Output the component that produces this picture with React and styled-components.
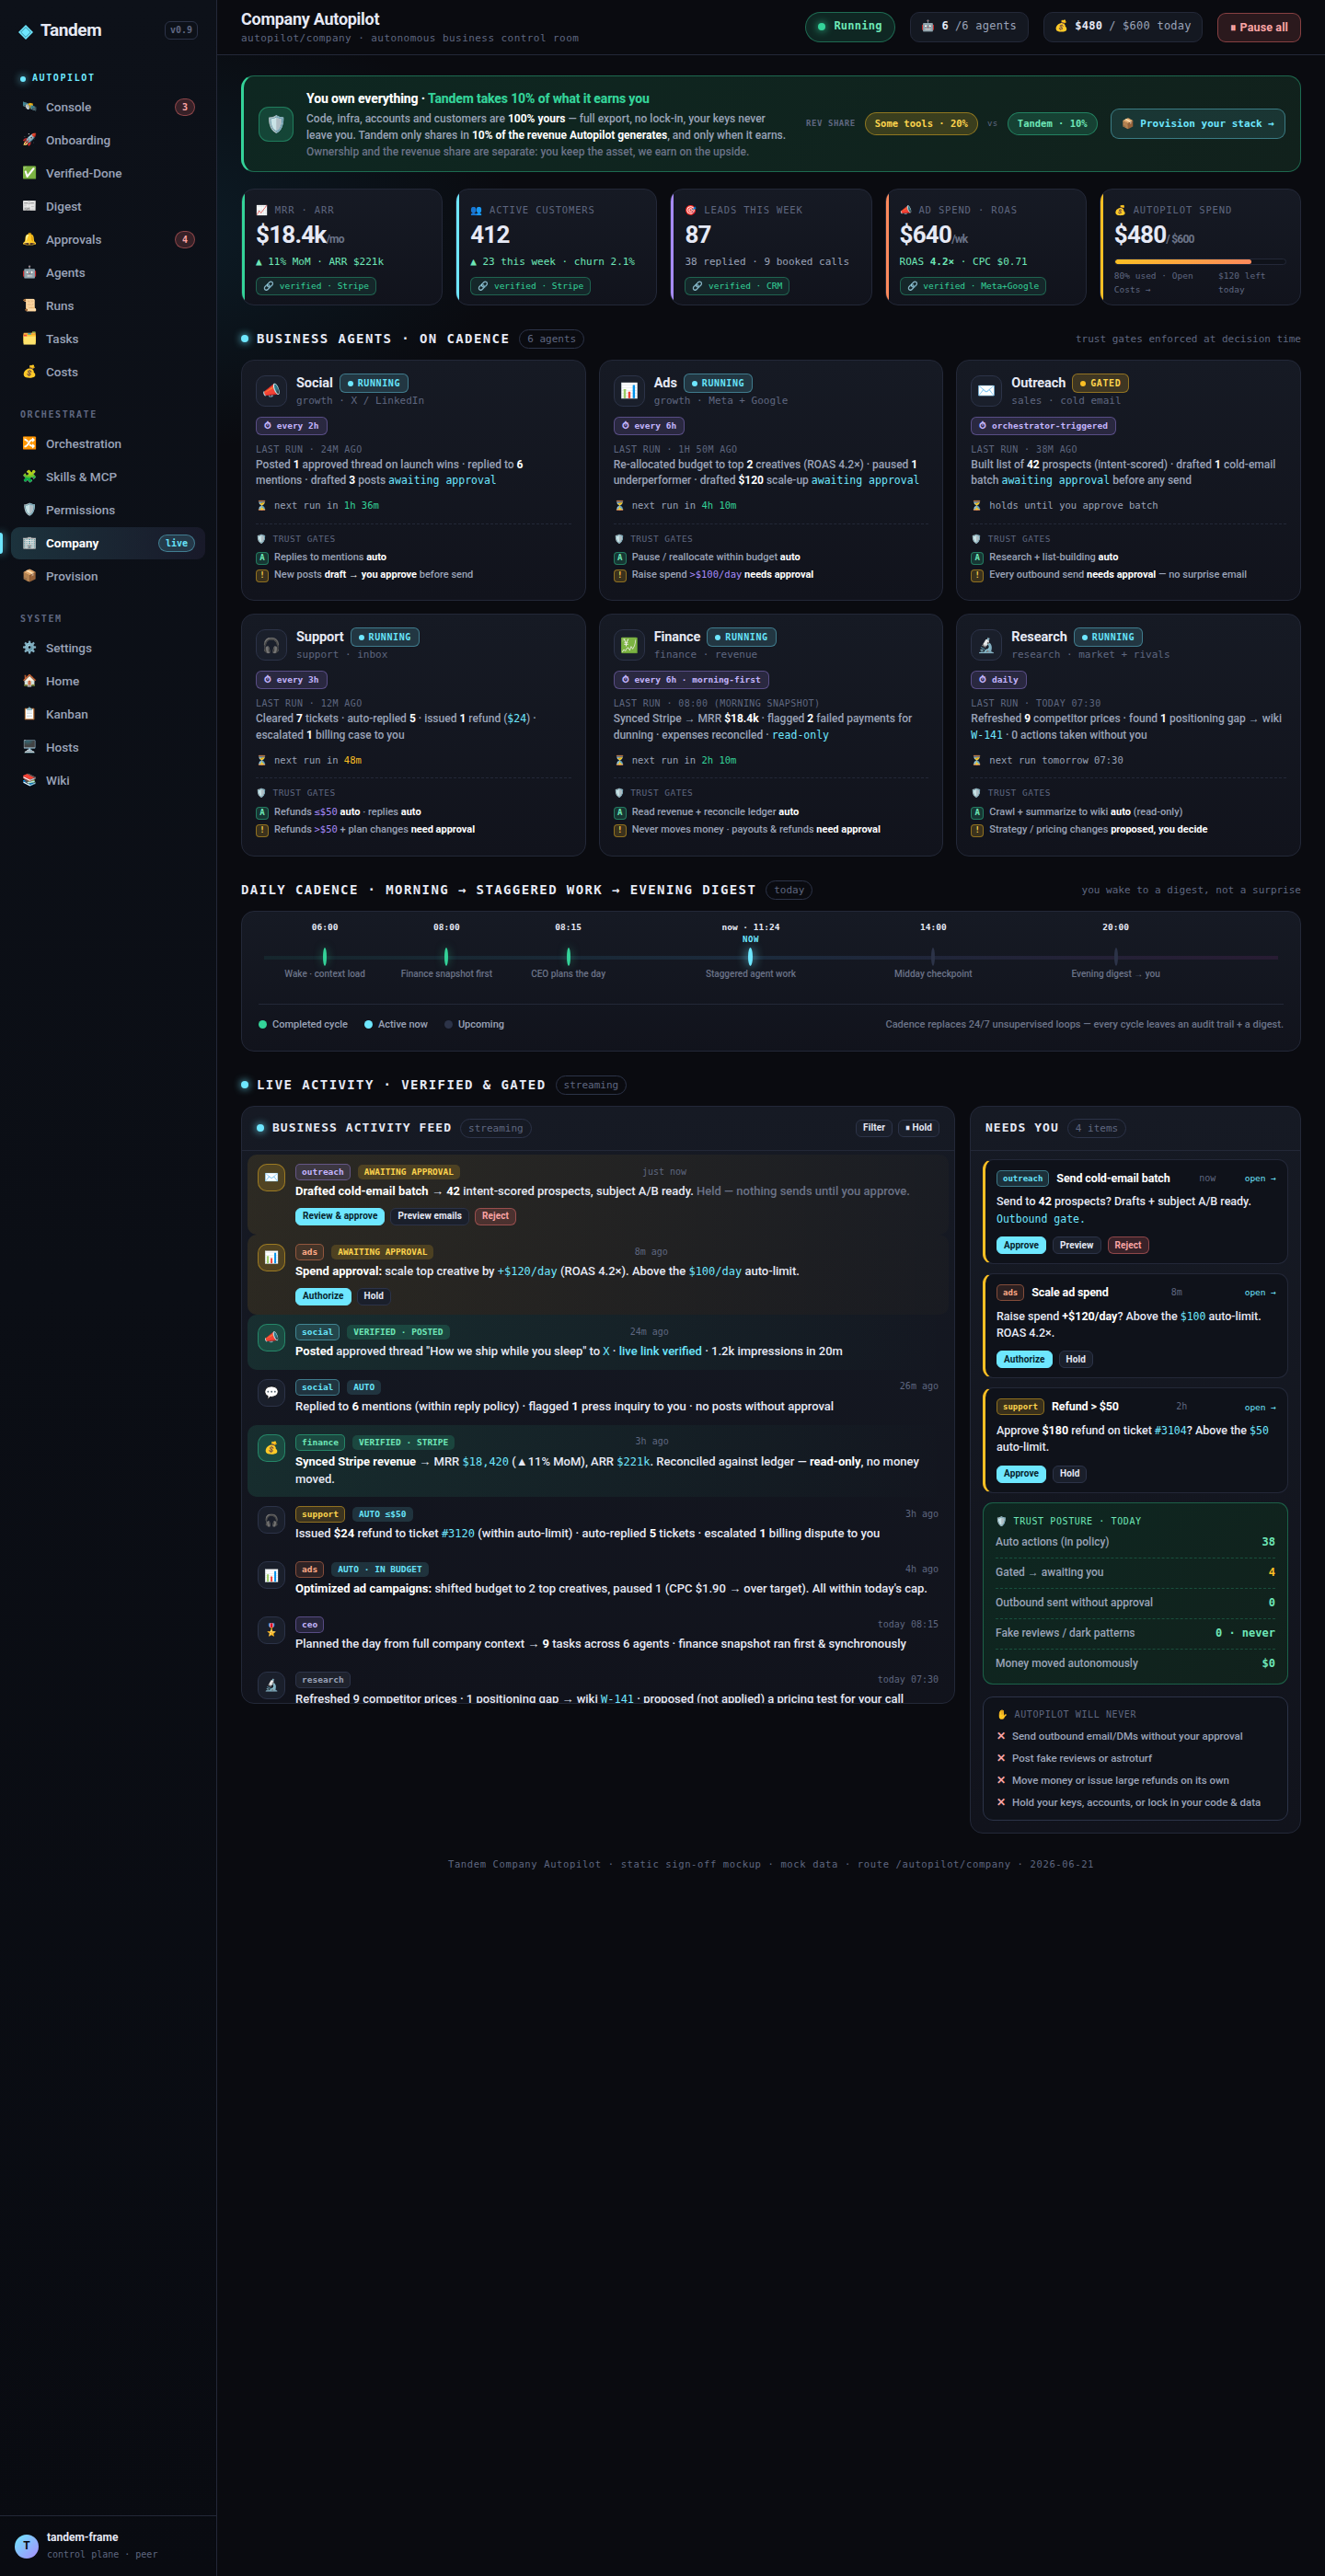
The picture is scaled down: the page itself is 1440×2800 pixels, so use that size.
import React from "react";
import styled, { createGlobalStyle, css } from "styled-components";

const GlobalStyle = createGlobalStyle`
  * { box-sizing: border-box; }
  body {
    margin: 0;
    background: #0a0b10;
    color: #e6e9f5;
    font-family: Roboto, sans-serif;
    font-size: 13px;
    font-weight: 500;
    line-height: 1.45;
  }
  button { font-family: inherit; cursor: pointer; }
`;

const mono = css`
  font-family: "DejaVu Sans Mono", monospace;
`;

// palette for tags, badges and accents
const tons = {
  cyan: { cor: "#6ee7ff", texto: "#67e3f9", fundo: "rgba(110,231,255,.14)", borda: "rgba(110,231,255,.4)" },
  green: { cor: "#34d399", texto: "#6ee7b7", fundo: "rgba(52,211,153,.18)", borda: "rgba(52,211,153,.45)" },
  violet: { cor: "#a78bfa", texto: "#c4b5fd", fundo: "rgba(167,139,250,.14)", borda: "rgba(167,139,250,.38)" },
  amber: { cor: "#fbbf24", texto: "#fcd34d", fundo: "rgba(251,191,36,.18)", borda: "rgba(251,191,36,.45)" },
  orange: { cor: "#ff8a5c", texto: "#ffab87", fundo: "rgba(255,138,92,.12)", borda: "rgba(255,138,92,.42)" },
  red: { cor: "#f87171", texto: "#fca5a5", fundo: "rgba(248,113,113,.18)", borda: "rgba(248,113,113,.45)" },
  gray: { cor: "#2c3348", texto: "#9aa3b8", fundo: "rgba(148,163,184,.1)", borda: "#2c3348" },
};

const Shell = styled.div`
  display: grid;
  grid-template-columns: 236px 1fr;
  min-height: 100vh;
  background: radial-gradient(400px 240px at 160px 250px, rgba(20, 90, 120, .22), transparent), #0a0b10;
`;

/* ---------- sidebar ---------- */

const Sidebar = styled.aside`
  display: flex;
  flex-direction: column;
  border-right: 1px solid #232838;
  background: linear-gradient(180deg, #0d1119, #090b11);
`;

const Brand = styled.div`
  display: flex;
  align-items: center;
  height: 66px;
  padding: 0 20px;
  gap: 8px;
  > svg { margin-top: 4px; }
`;

const BrandName = styled.span`
  font-size: 19px;
  font-weight: 700;
  letter-spacing: -.02em;
`;

const Version = styled.span`
  ${mono}
  margin-left: auto;
  padding: 0 5px;
  font-size: 10px;
  font-weight: 700;
  line-height: 18px;
  color: #5f6780;
  border: 1px solid #2c3348;
  border-radius: 6px;
`;

const NavGroup = styled.nav`
  padding: 0 12px;
  margin-bottom: 21px;
`;

const NavTitle = styled.div`
  ${mono}
  display: flex;
  align-items: center;
  gap: 7px;
  height: 15px;
  padding: 0 10px;
  margin: ${p => (p.$live ? "12px" : "0")} 0 6px;
  font-size: 10px;
  font-weight: 700;
  letter-spacing: .16em;
  color: ${p => (p.$live ? "#6ee7ff" : "#5f6780")};
`;

const GlowDot = styled.i`
  flex: none;
  width: ${p => p.$size || 6}px;
  height: ${p => p.$size || 6}px;
  border-radius: 50%;
  background: ${p => tons[p.$tone || "cyan"].cor};
  box-shadow: ${p => (p.$flat ? "none" : `0 0 8px ${tons[p.$tone || "cyan"].cor}`)};
`;

const NavItem = styled.a`
  position: relative;
  display: flex;
  align-items: center;
  gap: 10px;
  height: 35px;
  margin: 1px 0;
  padding: 0 11px 0 12px;
  border-radius: 9px;
  font-size: 13.5px;
  color: #9aa3b8;
  ${p => p.$active && css`
    color: #fff;
    font-weight: 700;
    background: linear-gradient(90deg, rgba(110, 231, 255, .16), rgba(167, 139, 250, .08));
    &::before {
      content: "";
      position: absolute;
      left: -12px;
      top: 6px;
      width: 3px;
      height: 23px;
      border-radius: 0 3px 3px 0;
      background: #6ee7ff;
      box-shadow: 0 0 10px #6ee7ff;
    }
  `}
`;

const NavIcon = styled.span`
  width: 16px;
  font-size: 13px;
  text-align: center;
  white-space: nowrap;
`;

const NavBadge = styled.span`
  ${mono}
  margin-left: auto;
  padding: 0 7px;
  font-size: 10px;
  font-weight: 700;
  line-height: 17px;
  border-radius: 20px;
  color: ${p => tons[p.$tone].texto};
  background: ${p => tons[p.$tone].fundo};
  border: 1px solid ${p => tons[p.$tone].borda};
`;

const SideFoot = styled.div`
  display: flex;
  align-items: center;
  gap: 9px;
  height: 66px;
  margin-top: auto;
  padding: 0 16px;
  border-top: 1px solid #232838;
`;

const Avatar = styled.span`
  display: grid;
  place-items: center;
  width: 26px;
  height: 26px;
  border-radius: 50%;
  font-size: 12px;
  font-weight: 700;
  color: #0a0b10;
  background: linear-gradient(135deg, #6ee7ff, #a78bfa);
`;

const FootName = styled.div`
  font-size: 12px;
  font-weight: 700;
  line-height: 19px;
`;

const FootSub = styled.div`
  ${mono}
  font-size: 10px;
  line-height: 18px;
  color: #5f6780;
`;

/* ---------- topbar ---------- */

const Main = styled.main`
  min-width: 0;
`;

const Topbar = styled.header`
  display: flex;
  align-items: center;
  gap: 16px;
  height: 60px;
  padding: 0 26px;
  border-bottom: 1px solid #232838;
  background: #0a0b10;
`;

const TitleBlock = styled.div`
  margin-right: auto;
`;

const PageTitle = styled.h1`
  margin: 0;
  font-size: 18px;
  font-weight: 700;
  line-height: 24px;
  letter-spacing: -.015em;
`;

const PageSub = styled.div`
  ${mono}
  font-size: 11px;
  line-height: 18px;
  letter-spacing: .04em;
  color: #5f6780;
`;

const StatPill = styled.div`
  ${mono}
  display: flex;
  align-items: center;
  gap: ${p => (p.$running ? 9 : 7)}px;
  height: 33px;
  padding: 0 ${p => (p.$running ? 13 : 11.5)}px 1px;
  font-size: 12px;
  letter-spacing: .02em;
  white-space: nowrap;
  border-radius: ${p => (p.$running ? 20 : 10)}px;
  font-weight: ${p => (p.$running ? 700 : 400)};
  color: ${p => (p.$running ? "#6ee7b7" : "#9aa3b8")};
  background: ${p => (p.$running ? "rgba(52,211,153,.14)" : "#141821")};
  border: 1px solid ${p => (p.$running ? "rgba(52,211,153,.4)" : "#232838")};
  b { color: #e6e9f5; }
`;

const PauseButton = styled.button`
  height: 32px;
  padding: 0 13px;
  font-size: 12.5px;
  font-weight: 700;
  letter-spacing: .01em;
  color: #fca5a5;
  background: rgba(248, 113, 113, .14);
  border: 1px solid rgba(248, 113, 113, .45);
  border-radius: 9px;
`;

/* ---------- content ---------- */

const Content = styled.div`
  padding: 22px 26px 0;
`;

const Banner = styled.section`
  display: flex;
  align-items: center;
  height: 105px;
  padding: 0 16px;
  border: 1px solid rgba(52, 211, 153, .4);
  border-left: 3px solid #34d399;
  border-radius: 14px;
  background: linear-gradient(135deg, #0e2721, #11211c);
`;

const BannerIcon = styled.div`
  display: grid;
  place-items: center;
  flex: none;
  width: 38px;
  height: 38px;
  font-size: 18px;
  line-height: 20px;
  border-radius: 11px;
  background: rgba(52, 211, 153, .18);
  border: 1px solid rgba(52, 211, 153, .4);
`;

const BannerText = styled.div`
  flex: 1;
  margin: 0 14px;
  font-size: 12px;
  line-height: 18px;
  color: #9aa3b8;
  b { color: #fff; }
`;

const BannerTitle = styled.div`
  margin-bottom: 2px;
  font-size: 14px;
  font-weight: 800;
  line-height: 22px;
  letter-spacing: -.01em;
  color: #fff;
  span { color: #34d399; }
`;

const Dim = styled.span`
  color: #6b7388;
`;

const RevShare = styled.div`
  ${mono}
  display: flex;
  align-items: center;
  gap: 10px;
  margin-right: 14px;
  font-size: 9px;
  letter-spacing: .06em;
  color: #5f6780;
  white-space: nowrap;
`;

const RevLabel = styled.span`
  font-weight: 700;
`;

const RevPill = styled.span`
  padding: 0 10px;
  font-size: 10.5px;
  font-weight: 700;
  letter-spacing: 0;
  line-height: 23px;
  border-radius: 20px;
  color: ${p => tons[p.$tone].texto};
  background: ${p => tons[p.$tone].fundo};
  border: 1px solid ${p => tons[p.$tone].borda};
`;

const StackButton = styled.button`
  ${mono}
  height: 33px;
  padding: 0 11px 1px;
  font-size: 11px;
  font-weight: 700;
  white-space: nowrap;
  color: #6ee7ff;
  background: rgba(110, 231, 255, .1);
  border: 1px solid rgba(110, 231, 255, .4);
  border-radius: 9px;
`;

const KpiGrid = styled.section`
  display: grid;
  grid-template-columns: repeat(5, 1fr);
  gap: 14px;
  margin-top: 18px;
`;

const cardBase = css`
  background: linear-gradient(180deg, #161a24, #11131c);
  border: 1px solid #232838;
  border-radius: 14px;
`;

const KpiCard = styled.div`
  ${cardBase}
  position: relative;
  overflow: hidden;
  height: 127px;
  padding: 14px 15px 0;
  &::before {
    content: "";
    position: absolute;
    left: 0;
    top: 0;
    bottom: 0;
    width: 3px;
    background: ${p => tons[p.$tone].cor};
  }
`;

const KpiLabel = styled.div`
  ${mono}
  display: flex;
  gap: 7px;
  font-size: 10.5px;
  line-height: 16px;
  letter-spacing: .08em;
  color: #5f6780;
`;

const KpiValue = styled.div`
  margin-top: 3px;
  font-size: 26px;
  font-weight: 700;
  line-height: 32px;
  letter-spacing: -.03em;
  small {
    font-size: 12px;
    color: #6b7388;
  }
`;

const KpiDelta = styled.div`
  ${mono}
  margin-top: 1px;
  font-size: 11px;
  line-height: 16px;
  color: ${p => (p.$plain ? "#9aa3b8" : "#6ee7b7")};
`;

const Verified = styled.span`
  ${mono}
  display: inline-block;
  margin-top: 8px;
  padding: 0 7px;
  font-size: 9.5px;
  line-height: 18px;
  color: #34d399;
  background: rgba(52, 211, 153, .1);
  border: 1px solid rgba(52, 211, 153, .35);
  border-radius: 6px;
`;

const Meter = styled.div`
  height: 7px;
  margin-top: 5px;
  overflow: hidden;
  border: 1px solid #232838;
  border-radius: 6px;
  background: #0f121a;
`;

const MeterFill = styled.div`
  height: 100%;
  border-radius: 6px;
  background: linear-gradient(90deg, #fbbf24, #ff8a5c);
`;

const MeterFoot = styled.div`
  ${mono}
  display: flex;
  justify-content: space-between;
  margin-top: 4px;
  font-size: 9.5px;
  line-height: 15px;
  color: #5f6780;
`;

const SectionHead = styled.div`
  display: flex;
  align-items: center;
  gap: 10px;
  height: 21px;
  margin: 26px 0 12px;
`;

const SectionTitle = styled.h2`
  ${mono}
  display: flex;
  align-items: center;
  gap: 9px;
  margin: 0;
  font-size: ${p => (p.$small ? 13 : 14)}px;
  font-weight: 700;
  letter-spacing: ${p => (p.$small ? ".08em" : ".1em")};
`;

const CountChip = styled.span`
  ${mono}
  padding: 0 8px;
  font-size: 11px;
  line-height: 19px;
  color: #5f6780;
  border: 1px solid #2c3348;
  border-radius: 20px;
`;

const SectionHint = styled.span`
  ${mono}
  margin-left: auto;
  font-size: 11px;
  color: #5f6780;
`;

const AgentGrid = styled.section`
  display: grid;
  grid-template-columns: repeat(3, 1fr);
  grid-template-rows: 262.4px 263.6px;
  gap: 14px;
`;

const AgentCard = styled.article`
  ${cardBase}
  padding: 14px 15px;
`;

const AgentHead = styled.div`
  display: flex;
  align-items: center;
  gap: 10px;
  height: 38px;
`;

const IconBox = styled.div`
  display: grid;
  place-items: center;
  flex: none;
  width: ${p => p.$size}px;
  height: ${p => p.$size}px;
  font-size: ${p => (p.$size > 32 ? 16 : 13)}px;
  line-height: 1.2;
  border-radius: 10px;
  background: ${p => (p.$tone ? tons[p.$tone].fundo : "#1a1f2b")};
  border: 1px solid ${p => (p.$tone ? tons[p.$tone].borda : "#2c3348")};
`;

const AgentName = styled.div`
  display: flex;
  align-items: center;
  gap: 7px;
  height: 21px;
  font-size: 14.5px;
  font-weight: 700;
  letter-spacing: -.005em;
`;

const StateBadge = styled.span`
  ${mono}
  display: flex;
  align-items: center;
  gap: 5px;
  padding: 0 8px;
  font-size: 10px;
  font-weight: 700;
  line-height: 19px;
  letter-spacing: .06em;
  border-radius: 6px;
  color: ${p => tons[p.$tone].texto};
  background: ${p => tons[p.$tone].fundo};
  border: 1px solid ${p => tons[p.$tone].borda};
`;

const AgentRole = styled.div`
  ${mono}
  font-size: 11px;
  line-height: 17px;
  color: #5f6780;
`;

const CadenceChip = styled.div`
  ${mono}
  width: fit-content;
  margin-top: 9px;
  padding: 0 8px;
  font-size: 9.5px;
  font-weight: 700;
  line-height: 18px;
  color: #c4b5fd;
  background: rgba(167, 139, 250, .14);
  border: 1px solid rgba(167, 139, 250, .38);
  border-radius: 6px;
`;

const LastRun = styled.div`
  ${mono}
  margin-top: 8px;
  font-size: 10px;
  line-height: 16px;
  letter-spacing: .04em;
  color: #5f6780;
`;

const RunText = styled.div`
  font-size: 12px;
  line-height: 17.4px;
  color: #9aa3b8;
  b { color: #fff; }
`;

const Code = styled.span`
  ${mono}
  font-size: ${p => p.$size || 11.5}px;
  line-height: 1;
  color: ${p => tons[p.$tone || "cyan"].cor};
`;

const NextRun = styled.div`
  ${mono}
  display: flex;
  gap: 7px;
  margin-top: 9.6px;
  padding-bottom: 11.7px;
  font-size: 10.5px;
  line-height: 16px;
  color: #9aa3b8;
  border-bottom: 1px dashed #232838;
`;

const GateTitle = styled.div`
  ${mono}
  display: flex;
  gap: 6px;
  margin: 8.7px 0 5.5px;
  font-size: 9.5px;
  line-height: 14px;
  letter-spacing: .05em;
  color: #5f6780;
`;

const GateRow = styled.div`
  display: flex;
  gap: 6px;
  height: 19px;
  font-size: 11px;
  line-height: 16px;
  color: #9aa3b8;
  b { color: #fff; }
`;

const GateMark = styled.span`
  ${mono}
  flex: none;
  width: 14px;
  height: 14px;
  margin-top: 2px;
  font-size: 9px;
  font-weight: 700;
  line-height: 11px;
  text-align: center;
  border-radius: 4px;
  color: ${p => tons[p.$tone].texto};
  background: ${p => tons[p.$tone].fundo};
  border: 1px solid ${p => tons[p.$tone].borda};
`;

/* ---------- cadence ---------- */

const CadenceCard = styled.section`
  ${cardBase}
  height: 153px;
  padding: 9px 18px 0;
`;

// one column per stop, sized so that each stop is centred on its share of the day
const Rail = styled.div`
  display: grid;
  grid-template-columns: 12fr 12fr 12fr 24fr 12fr 24fr 4fr;
  height: 91px;
  margin: 0 6px;
  background: linear-gradient(90deg, #16262d, #1c2a3c 50%, #281c33) 0 39px / 100% 4px no-repeat;
`;

const Stop = styled.div`
  display: flex;
  flex-direction: column;
  align-items: center;
  white-space: nowrap;
`;

const StopTime = styled.div`
  ${mono}
  height: 15px;
  font-size: 9.5px;
  font-weight: 700;
  line-height: 15px;
`;

const StopNow = styled.div`
  ${mono}
  height: 15px;
  font-size: 9px;
  font-weight: 700;
  line-height: 13px;
  letter-spacing: .06em;
  color: #6ee7ff;
`;

const StopTick = styled.div`
  width: ${p => (p.$tone === "cyan" ? 5 : 4)}px;
  height: 20px;
  border-radius: 50%;
  background: ${p => tons[p.$tone].cor};
  box-shadow: ${p => ({
    gray: "none",
    green: "0 0 10px rgba(52,211,153,.5)",
    cyan: "0 0 12px #6ee7ff",
  }[p.$tone])};
`;

const StopLabel = styled.div`
  font-size: 10px;
  line-height: 17px;
  color: #6b7388;
`;

const Legend = styled.div`
  display: flex;
  align-items: center;
  gap: 18px;
  height: 44px;
  font-size: 11px;
  color: #9aa3b8;
  border-top: 1px solid #232838;
  > span {
    display: flex;
    align-items: center;
    gap: 6px;
  }
  > p {
    margin: 0 0 0 auto;
    color: #6b7388;
  }
`;

/* ---------- activity ---------- */

const ActivityGrid = styled.section`
  display: grid;
  grid-template-columns: 1fr 360px;
  gap: 16px;
  align-items: start;
`;

const Panel = styled.section`
  ${cardBase}
  min-width: 0;
  overflow: hidden;
`;

const PanelHead = styled.div`
  display: flex;
  align-items: center;
  gap: 9px;
  height: 48px;
  padding: 0 16px;
  border-bottom: 1px solid #232838;
`;

const Actions = styled.div`
  display: flex;
  gap: ${p => p.$gap || 6}px;
  margin-top: ${p => p.$top || 0}px;
  margin-left: ${p => (p.$right ? "auto" : "0")};
`;

const SmallButton = styled.button`
  height: 19px;
  padding: 0 7px;
  font-size: 10px;
  font-weight: 700;
  line-height: 16px;
  letter-spacing: .01em;
  border-radius: 6px;
  white-space: nowrap;
  color: #e6e9f5;
  background: #1a1f2b;
  border: 1px solid #2c3348;
  ${p => p.$kind === "primary" && css`
    color: #06232b;
    background: #6ee7ff;
    border-color: #6ee7ff;
  `}
  ${p => p.$kind === "danger" && css`
    color: #fca5a5;
    background: rgba(248, 113, 113, .18);
    border-color: rgba(248, 113, 113, .45);
  `}
`;

const FeedList = styled.div`
  height: 600px;
  padding: 4px 6px;
  overflow: hidden;
`;

const FeedRow = styled.div`
  display: flex;
  gap: 11px;
  padding: 10px 11px;
  border-radius: 10px;
  background: ${p => ({
    amber: "linear-gradient(90deg, rgba(251,191,36,.1), rgba(251,191,36,.02))",
    green: "linear-gradient(90deg, rgba(52,211,153,.12), transparent)",
  }[p.$tone] || "none")};
`;

const FeedBody = styled.div`
  flex: 1;
  min-width: 0;
`;

const FeedHead = styled.div`
  display: flex;
  align-items: center;
  gap: 8px;
  height: 18px;
  margin-bottom: 3px;
  padding-right: ${p => p.$tail || 0}px;
`;

const Tag = styled.span`
  ${mono}
  padding: 0 6px;
  font-size: ${p => (p.$small ? 9 : 9.5)}px;
  font-weight: 700;
  line-height: 16px;
  border-radius: 5px;
  color: ${p => tons[p.$tone].texto};
  background: ${p => tons[p.$tone].fundo};
  border: 1px solid ${p => tons[p.$tone].borda};
`;

const Status = styled.span`
  ${mono}
  padding: 0 7px;
  font-size: 9.5px;
  font-weight: 700;
  line-height: 16px;
  border-radius: 5px;
  color: ${p => tons[p.$tone].texto};
  background: ${p => tons[p.$tone].fundo};
`;

const Time = styled.span`
  ${mono}
  margin-left: auto;
  margin-right: ${p => (p.$float ? "auto" : "0")};
  font-size: 10px;
  color: #5f6780;
`;

const FeedText = styled.div`
  font-size: 13px;
  line-height: 18.9px;
  b { color: #fff; }
`;

const NeedsBody = styled.div`
  display: flex;
  flex-direction: column;
  padding: 9px 13px 13px;
`;

const NeedCard = styled.article`
  margin-bottom: 10px;
  padding: 11px 12px 10px;
  border: 1px solid #232838;
  border-left: 3px solid #fbbf24;
  border-radius: 11px;
  background: #0f121a;
`;

const NeedHead = styled.div`
  display: flex;
  align-items: center;
  gap: 8px;
  height: 18px;
  strong {
    font-size: 12.5px;
    font-weight: 700;
    letter-spacing: -.01em;
    color: #fff;
  }
`;

const OpenLink = styled.a`
  ${mono}
  margin-left: auto;
  font-size: 9.5px;
  color: #6ee7ff;
`;

const NeedText = styled.p`
  margin: 7.4px 0 10px;
  font-size: 12.5px;
  line-height: 18.4px;
  b { color: #fff; }
`;

const Posture = styled.div`
  padding: 12px 13px 4px;
  border: 1px solid rgba(52, 211, 153, .35);
  border-radius: 11px;
  background: linear-gradient(135deg, #0e2721, #11211c);
`;

const BoxTitle = styled.div`
  ${mono}
  display: flex;
  gap: 7px;
  font-size: 10px;
  line-height: 15px;
  letter-spacing: .06em;
  color: ${p => (p.$green ? "#6ee7b7" : "#5f6780")};
`;

const PostureRow = styled.div`
  display: flex;
  justify-content: space-between;
  align-items: center;
  height: 33px;
  font-size: 12px;
  color: #9aa3b8;
  border-bottom: 1px dashed rgba(52, 211, 153, .25);
  &:last-child { border-bottom: 0; }
  b {
    ${mono}
    color: ${p => (p.$warn ? "#fbbf24" : "#6ee7b7")};
  }
`;

const NeverBox = styled.div`
  margin-top: 13px;
  padding: 11px 14px 7px;
  border: 1px solid #2c3348;
  border-radius: 11px;
  background: #0f121a;
  ${BoxTitle} { margin-bottom: 4px; }
`;

const NeverRow = styled.div`
  display: flex;
  gap: 8px;
  font-size: 11.5px;
  line-height: 24px;
  color: #9aa3b8;
  i {
    width: 9px;
    font-style: normal;
    font-weight: 700;
    color: #fca5a5;
  }
`;

const PageFoot = styled.footer`
  ${mono}
  margin-top: 25px;
  text-align: center;
  font-size: 10.5px;
  line-height: 17px;
  letter-spacing: .06em;
  color: #5f6780;
`;

const menu = [
  {
    titulo: "AUTOPILOT",
    live: true,
    itens: [
      ["🛰️", "Console", "3"], ["🚀", "Onboarding"], ["✅", "Verified-Done"], ["📰", "Digest"],
      ["🔔", "Approvals", "4"], ["🤖", "Agents"], ["📜", "Runs"], ["🗂️", "Tasks"], ["💰", "Costs"],
    ],
  },
  {
    titulo: "ORCHESTRATE",
    itens: [
      ["🔀", "Orchestration"], ["🧩", "Skills & MCP"], ["🛡️", "Permissions"],
      ["🏢", "Company", "live"], ["📦", "Provision"],
    ],
  },
  {
    titulo: "SYSTEM",
    itens: [["⚙️", "Settings"], ["🏠", "Home"], ["📋", "Kanban"], ["🖥️", "Hosts"], ["📚", "Wiki"]],
  },
];

const kpis = [
  { tone: "green", icon: "📈", label: "MRR · ARR", value: "$18.4k", unit: "/mo", delta: "▲ 11% MoM · ARR $221k", source: "Stripe" },
  { tone: "cyan", icon: "👥", label: "ACTIVE CUSTOMERS", value: "412", delta: "▲ 23 this week · churn 2.1%", source: "Stripe" },
  { tone: "violet", icon: "🎯", label: "LEADS THIS WEEK", value: "87", delta: "38 replied · 9 booked calls", plain: true, source: "CRM" },
  { tone: "orange", icon: "📣", label: "AD SPEND · ROAS", value: "$640", unit: "/wk", delta: <>ROAS <b>4.2×</b> · CPC $0.71</>, source: "Meta+Google" },
];

const agents = [
  {
    icon: "📣", name: "Social", role: "growth · X / LinkedIn", every: "every 2h", last: "24M AGO",
    text: <>Posted <b>1</b> approved thread on launch wins · replied to <b>6</b> mentions · drafted <b>3</b> posts <Code>awaiting approval</Code></>,
    next: <>next run in <Code $size={10.5} $tone="green">1h 36m</Code></>,
    auto: <>Replies to mentions <b>auto</b></>,
    gate: <>New posts <b>draft → you approve</b> before send</>,
  },
  {
    icon: "📊", name: "Ads", role: "growth · Meta + Google", every: "every 6h", last: "1H 50M AGO",
    text: <>Re-allocated budget to top <b>2</b> creatives (ROAS 4.2×) · paused <b>1</b> underperformer · drafted <b>$120</b> scale-up <Code>awaiting approval</Code></>,
    next: <>next run in <Code $size={10.5} $tone="green">4h 10m</Code></>,
    auto: <>Pause / reallocate within budget <b>auto</b></>,
    gate: <>Raise spend <Code $size={10.5} $tone="violet">&gt;$100/day</Code> <b>needs approval</b></>,
  },
  {
    icon: "✉️", name: "Outreach", role: "sales · cold email", every: "orchestrator-triggered", last: "38M AGO", gated: true,
    text: <>Built list of <b>42</b> prospects (intent-scored) · drafted <b>1</b> cold-email batch <Code>awaiting approval</Code> before any send</>,
    next: <>holds until you approve batch</>,
    auto: <>Research + list-building <b>auto</b></>,
    gate: <>Every outbound send <b>needs approval</b> — no surprise email</>,
  },
  {
    icon: "🎧", name: "Support", role: "support · inbox", every: "every 3h", last: "12M AGO",
    text: <>Cleared <b>7</b> tickets · auto-replied <b>5</b> · issued <b>1</b> refund (<Code>$24</Code>) · escalated <b>1</b> billing case to you</>,
    next: <>next run in <Code $size={10.5} $tone="amber">48m</Code></>,
    auto: <>Refunds <Code $size={10.5} $tone="violet">≤$50</Code> <b>auto</b> · replies <b>auto</b></>,
    gate: <>Refunds <Code $size={10.5} $tone="violet">&gt;$50</Code> + plan changes <b>need approval</b></>,
  },
  {
    icon: "💹", name: "Finance", role: "finance · revenue", every: "every 6h · morning-first", last: "08:00 (MORNING SNAPSHOT)",
    text: <>Synced Stripe → MRR <b>$18.4k</b> · flagged <b>2</b> failed payments for dunning · expenses reconciled · <Code>read-only</Code></>,
    next: <>next run in <Code $size={10.5} $tone="green">2h 10m</Code></>,
    auto: <>Read revenue + reconcile ledger <b>auto</b></>,
    gate: <>Never moves money · payouts & refunds <b>need approval</b></>,
  },
  {
    icon: "🔬", name: "Research", role: "research · market + rivals", every: "daily", last: "TODAY 07:30",
    text: <>Refreshed <b>9</b> competitor prices · found <b>1</b> positioning gap → wiki <Code>W-141</Code> · 0 actions taken without you</>,
    next: <>next run tomorrow 07:30</>,
    auto: <>Crawl + summarize to wiki <b>auto</b> (read-only)</>,
    gate: <>Strategy / pricing changes <b>proposed, you decide</b></>,
  },
];

const stops = [
  { time: "06:00", label: "Wake · context load", tone: "green" },
  { time: "08:00", label: "Finance snapshot first", tone: "green" },
  { time: "08:15", label: "CEO plans the day", tone: "green" },
  { time: "now · 11:24", label: "Staggered agent work", tone: "cyan" },
  { time: "14:00", label: "Midday checkpoint", tone: "gray" },
  { time: "20:00", label: "Evening digest → you", tone: "gray" },
];

const LiveLink = styled.a`
  color: #6ee7ff;
`;

const feed = [
  {
    icon: "✉️", tag: "outreach", tagTone: "violet", status: "AWAITING APPROVAL", tone: "amber", time: "just now",
    text: <><b>Drafted cold-email batch</b> → <b>42</b> intent-scored prospects, subject A/B ready. <Dim>Held — nothing sends until you approve.</Dim></>,
    actions: [["Review & approve", "primary"], ["Preview emails"], ["Reject", "danger"]],
  },
  {
    icon: "📊", tag: "ads", tagTone: "orange", status: "AWAITING APPROVAL", tone: "amber", time: "8m ago",
    text: <><b>Spend approval:</b> scale top creative by <Code $size={12}>+$120/day</Code> (ROAS 4.2×). Above the <Code $size={12}>$100/day</Code> auto-limit.</>,
    actions: [["Authorize", "primary"], ["Hold"]],
  },
  {
    icon: "📣", tag: "social", tagTone: "cyan", status: "VERIFIED · POSTED", tone: "green", time: "24m ago",
    text: <><b>Posted</b> approved thread "How we ship while you sleep" to <Code $size={12}>X</Code> · <LiveLink>live link verified</LiveLink> · 1.2k impressions in 20m</>,
  },
  {
    icon: "💬", tag: "social", tagTone: "cyan", status: "AUTO", time: "26m ago",
    text: <>Replied to <b>6</b> mentions (within reply policy) · flagged <b>1</b> press inquiry to you · no posts without approval</>,
  },
  {
    icon: "💰", tag: "finance", tagTone: "green", status: "VERIFIED · STRIPE", tone: "green", time: "3h ago",
    text: <><b>Synced Stripe revenue</b> → MRR <Code $size={12}>$18,420</Code> (▲11% MoM), ARR <Code $size={12}>$221k</Code>. Reconciled against ledger — <b>read-only</b>, no money moved.</>,
  },
  {
    icon: "🎧", tag: "support", tagTone: "amber", status: "AUTO ≤$50", time: "3h ago",
    text: <>Issued <b>$24</b> refund to ticket <Code $size={12}>#3120</Code> (within auto-limit) · auto-replied <b>5</b> tickets · escalated <b>1</b> billing dispute to you</>,
  },
  {
    icon: "📊", tag: "ads", tagTone: "orange", status: "AUTO · IN BUDGET", time: "4h ago",
    text: <><b>Optimized ad campaigns:</b> shifted budget to 2 top creatives, paused 1 (CPC $1.90 → over target). All within today's cap.</>,
  },
  {
    icon: "🎖️", tag: "ceo", tagTone: "violet", time: "today 08:15",
    text: <>Planned the day from full company context → <b>9</b> tasks across 6 agents · finance snapshot ran first & synchronously</>,
  },
  {
    icon: "🔬", tag: "research", tagTone: "gray", time: "today 07:30",
    text: <>Refreshed 9 competitor prices · 1 positioning gap → wiki <Code $size={12}>W-141</Code> · proposed (not applied) a pricing test for your call</>,
  },
];

const needs = [
  {
    tag: "outreach", tone: "cyan", title: "Send cold-email batch", time: "now",
    text: <>Send to <b>42</b> prospects? Drafts + subject A/B ready. <Code>Outbound gate.</Code></>,
    actions: [["Approve", "primary"], ["Preview"], ["Reject", "danger"]],
  },
  {
    tag: "ads", tone: "orange", title: "Scale ad spend", time: "8m",
    text: <>Raise spend <b>+$120/day</b>? Above the <Code>$100</Code> auto-limit. ROAS 4.2×.</>,
    actions: [["Authorize", "primary"], ["Hold"]],
  },
  {
    tag: "support", tone: "amber", title: "Refund > $50", time: "2h",
    text: <>Approve <b>$180</b> refund on ticket <Code>#3104</Code>? Above the <Code>$50</Code> auto-limit.</>,
    actions: [["Approve", "primary"], ["Hold"]],
  },
];

const posture = [
  ["Auto actions (in policy)", "38"],
  ["Gated → awaiting you", "4"],
  ["Outbound sent without approval", "0"],
  ["Fake reviews / dark patterns", "0 · never"],
  ["Money moved autonomously", "$0"],
];

const never = [
  "Send outbound email/DMs without your approval",
  "Post fake reviews or astroturf",
  "Move money or issue large refunds on its own",
  "Hold your keys, accounts, or lock in your code & data",
];

const Logo = () => (
  <svg width="16" height="16" viewBox="0 0 16 16">
    <path d="M8 0l8 8-8 8-8-8z" fill="#6ee7ff" />
    <path d="M8 2.6l5.4 5.4L8 13.4 2.6 8z" fill="none" stroke="#2b7286" strokeWidth=".8" />
  </svg>
);

const ButtonRow = ({ items, gap, top }) => (
  <Actions $gap={gap} $top={top}>
    {items.map(([label, kind]) => <SmallButton key={label} $kind={kind}>{label}</SmallButton>)}
  </Actions>
);

class App extends React.Component {
  state = {
    used: 80
  }

  render() {
    return (
      <Shell>
        <GlobalStyle />

        <Sidebar>
          <Brand>
            <Logo />
            <BrandName>Tandem</BrandName>
            <Version>v0.9</Version>
          </Brand>
          {menu.map(grupo => (
            <NavGroup key={grupo.titulo}>
              <NavTitle $live={grupo.live}>
                {grupo.live && <GlowDot />}
                {grupo.titulo}
              </NavTitle>
              {grupo.itens.map(([icon, nome, badge]) => (
                <NavItem key={nome} $active={nome === "Company"}>
                  <NavIcon>{icon}</NavIcon>
                  {nome}
                  {badge && <NavBadge $tone={badge === "live" ? "cyan" : "red"}>{badge}</NavBadge>}
                </NavItem>
              ))}
            </NavGroup>
          ))}
          <SideFoot>
            <Avatar>T</Avatar>
            <div>
              <FootName>tandem-frame</FootName>
              <FootSub>control plane · peer</FootSub>
            </div>
          </SideFoot>
        </Sidebar>

        <Main>
          <Topbar>
            <TitleBlock>
              <PageTitle>Company Autopilot</PageTitle>
              <PageSub>autopilot/company · autonomous business control room</PageSub>
            </TitleBlock>
            <StatPill $running><GlowDot $size={8} $tone="green" />Running</StatPill>
            <StatPill><span>🤖</span><b>6</b><span>/6 agents</span></StatPill>
            <StatPill><span>💰</span><b>$480</b><span>/ $600 today</span></StatPill>
            <PauseButton>⏸ Pause all</PauseButton>
          </Topbar>

          <Content>
            <Banner>
              <BannerIcon>🛡️</BannerIcon>
              <BannerText>
                <BannerTitle>You own everything · <span>Tandem takes 10% of what it earns you</span></BannerTitle>
                Code, infra, accounts and customers are <b>100% yours</b> — full export, no lock-in, your keys never
                leave you. Tandem only shares in <b>10% of the revenue Autopilot generates</b>, and only when it earns.{" "}
                <Dim>Ownership and the revenue share are separate: you keep the asset, we earn on the upside.</Dim>
              </BannerText>
              <RevShare>
                <RevLabel>REV SHARE</RevLabel>
                <RevPill $tone="amber">Some tools · 20%</RevPill>
                vs
                <RevPill $tone="green">Tandem · 10%</RevPill>
              </RevShare>
              <StackButton>📦 Provision your stack →</StackButton>
            </Banner>

            <KpiGrid>
              {kpis.map(k => (
                <KpiCard key={k.label} $tone={k.tone}>
                  <KpiLabel><span>{k.icon}</span>{k.label}</KpiLabel>
                  <KpiValue>{k.value}<small>{k.unit}</small></KpiValue>
                  <KpiDelta $plain={k.plain}>{k.delta}</KpiDelta>
                  <Verified>🔗 verified · {k.source}</Verified>
                </KpiCard>
              ))}
              <KpiCard $tone="amber">
                <KpiLabel><span>💰</span>AUTOPILOT SPEND</KpiLabel>
                <KpiValue>$480<small>/ $600</small></KpiValue>
                <Meter><MeterFill style={{ width: `${this.state.used}%` }} /></Meter>
                <MeterFoot>
                  <span>{this.state.used}% used · Open Costs →</span>
                  <span>$120 left today</span>
                </MeterFoot>
              </KpiCard>
            </KpiGrid>

            <SectionHead>
              <SectionTitle><GlowDot $size={8} />BUSINESS AGENTS · ON CADENCE</SectionTitle>
              <CountChip>6 agents</CountChip>
              <SectionHint>trust gates enforced at decision time</SectionHint>
            </SectionHead>
            <AgentGrid>
              {agents.map(a => (
                <AgentCard key={a.name}>
                  <AgentHead>
                    <IconBox $size={34}>{a.icon}</IconBox>
                    <div>
                      <AgentName>
                        {a.name}
                        <StateBadge $tone={a.gated ? "amber" : "cyan"}>
                          <GlowDot $flat $tone={a.gated ? "amber" : "cyan"} />
                          {a.gated ? "GATED" : "RUNNING"}
                        </StateBadge>
                      </AgentName>
                      <AgentRole>{a.role}</AgentRole>
                    </div>
                  </AgentHead>
                  <CadenceChip>⏱ {a.every}</CadenceChip>
                  <LastRun>LAST RUN · {a.last}</LastRun>
                  <RunText>{a.text}</RunText>
                  <NextRun><span>⏳</span><span>{a.next}</span></NextRun>
                  <GateTitle><span>🛡️</span>TRUST GATES</GateTitle>
                  <GateRow><GateMark $tone="green">A</GateMark><span>{a.auto}</span></GateRow>
                  <GateRow><GateMark $tone="amber">!</GateMark><span>{a.gate}</span></GateRow>
                </AgentCard>
              ))}
            </AgentGrid>

            <SectionHead>
              <SectionTitle>DAILY CADENCE · MORNING → STAGGERED WORK → EVENING DIGEST</SectionTitle>
              <CountChip>today</CountChip>
              <SectionHint>you wake to a digest, not a surprise</SectionHint>
            </SectionHead>
            <CadenceCard>
              <Rail>
                {stops.map(s => (
                  <Stop key={s.time}>
                    <StopTime>{s.time}</StopTime>
                    <StopNow>{s.tone === "cyan" && "NOW"}</StopNow>
                    <StopTick $tone={s.tone} />
                    <StopLabel>{s.label}</StopLabel>
                  </Stop>
                ))}
              </Rail>
              <Legend>
                <span><GlowDot $flat $size={9} $tone="green" />Completed cycle</span>
                <span><GlowDot $flat $size={9} />Active now</span>
                <span><GlowDot $flat $size={9} $tone="gray" />Upcoming</span>
                <p>Cadence replaces 24/7 unsupervised loops — every cycle leaves an audit trail + a digest.</p>
              </Legend>
            </CadenceCard>

            <SectionHead>
              <SectionTitle><GlowDot $size={8} />LIVE ACTIVITY · VERIFIED & GATED</SectionTitle>
              <CountChip>streaming</CountChip>
            </SectionHead>
            <ActivityGrid>
              <Panel>
                <PanelHead>
                  <SectionTitle $small><GlowDot $size={8} />BUSINESS ACTIVITY FEED</SectionTitle>
                  <CountChip>streaming</CountChip>
                  <Actions $right>
                    <SmallButton>Filter</SmallButton>
                    <SmallButton>⏸ Hold</SmallButton>
                  </Actions>
                </PanelHead>
                <FeedList>
                  {feed.map((f, i) => (
                    <FeedRow key={i} $tone={f.tone}>
                      <IconBox $size={30} $tone={f.tone}>{f.icon}</IconBox>
                      <FeedBody>
                        <FeedHead $tail={{ amber: 84, green: 105 }[f.tone]}>
                          <Tag $tone={f.tagTone}>{f.tag}</Tag>
                          {f.status && <Status $tone={f.tone || "cyan"}>{f.status}</Status>}
                          <Time $float={f.tone}>{f.time}</Time>
                        </FeedHead>
                        <FeedText>{f.text}</FeedText>
                        {f.actions && <ButtonRow items={f.actions} top={8} />}
                      </FeedBody>
                    </FeedRow>
                  ))}
                </FeedList>
              </Panel>

              <Panel>
                <PanelHead>
                  <SectionTitle $small>NEEDS YOU</SectionTitle>
                  <CountChip>4 items</CountChip>
                </PanelHead>
                <NeedsBody>
                  {needs.map(n => (
                    <NeedCard key={n.tag}>
                      <NeedHead>
                        <Tag $small $tone={n.tone}>{n.tag}</Tag>
                        <strong>{n.title}</strong>
                        <Time>{n.time}</Time>
                        <OpenLink>open →</OpenLink>
                      </NeedHead>
                      <NeedText>{n.text}</NeedText>
                      <ButtonRow items={n.actions} gap={7} />
                    </NeedCard>
                  ))}
                  <Posture>
                    <BoxTitle $green><span>🛡️</span>TRUST POSTURE · TODAY</BoxTitle>
                    {posture.map(([label, valor]) => (
                      <PostureRow key={label} $warn={valor === "4"}>{label}<b>{valor}</b></PostureRow>
                    ))}
                  </Posture>
                  <NeverBox>
                    <BoxTitle><span>✋</span>AUTOPILOT WILL NEVER</BoxTitle>
                    {never.map(item => (
                      <NeverRow key={item}><i>✕</i>{item}</NeverRow>
                    ))}
                  </NeverBox>
                </NeedsBody>
              </Panel>
            </ActivityGrid>

            <PageFoot>Tandem Company Autopilot · static sign-off mockup · mock data · route /autopilot/company · 2026-06-21</PageFoot>
          </Content>
        </Main>
      </Shell>
    );
  }
}

export default App;
